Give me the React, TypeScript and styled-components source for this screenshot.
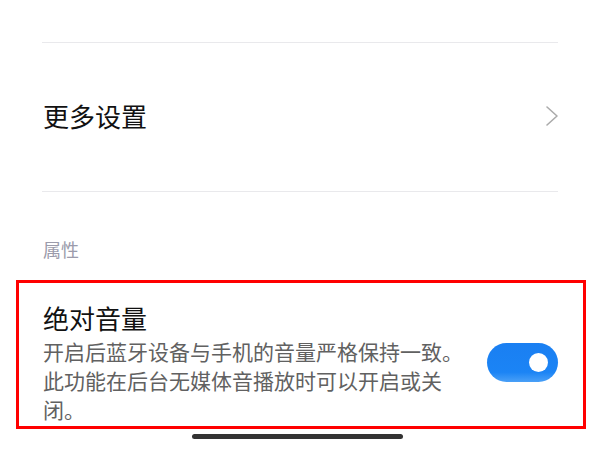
import React from "react";
import styled, { createGlobalStyle } from "styled-components";

const GlobalStyle = createGlobalStyle`
  html, body {
    margin: 0;
    padding: 0;
    background: #ffffff;
  }
  body {
    font-family: "Noto Sans CJK SC", "Noto Sans", sans-serif;
    -webkit-font-smoothing: antialiased;
  }
`;

const Page = styled.div`
  width: 600px;
  height: 450px;
  overflow: hidden;
  background: #ffffff;
  display: flex;
  flex-direction: column;
  padding-top: 42px;
  box-sizing: border-box;
`;

const List = styled.div`
  display: flex;
  flex-direction: column;
  padding: 0 42px;
`;

const Divider = styled.div`
  height: 1px;
  background: #e9e9ec;
`;

const NavRow = styled.div`
  height: 148px;
  display: flex;
  align-items: center;
  justify-content: space-between;
  padding-left: 1px;
`;

const RowTitle = styled.span`
  font-size: 26px;
  line-height: 36px;
  color: #111111;
  margin-top: -3px;
`;

const Chevron = styled.svg`
  width: 14px;
  height: 22px;
  margin-right: -1px;
  margin-top: -2px;
`;

const SectionHeader = styled.div`
  font-size: 18px;
  line-height: 24px;
  color: #9b9bab;
  padding-left: 1px;
  margin-top: 45px;
  height: 43px;
`;

const Highlight = styled.div`
  margin: 0 14px 0 16px;
  border: 3px solid #ff0000;
  display: flex;
  align-items: center;
  padding: 17px 25px 1px 24px;
  height: 149px;
  box-sizing: border-box;
`;

const TextColumn = styled.div`
  flex: 1;
  display: flex;
  flex-direction: column;
  min-width: 0;
`;

const ItemTitle = styled.div`
  font-size: 26px;
  line-height: 34px;
  color: #111111;
`;

const Description = styled.div`
  font-size: 21px;
  line-height: 29px;
  color: #616161;
  margin-top: 2px;
`;

const Switch = styled.div<{ $on: boolean }>`
  flex: none;
  width: 71px;
  height: 39px;
  border-radius: 20px;
  margin-left: 19px;
  background: ${(p) =>
    p.$on ? "linear-gradient(180deg, #1a7ff2 0%, #1b84f5 75%, #4aa0f7 100%)" : "#cccccc"};
  display: flex;
  align-items: center;
  justify-content: ${(p) => (p.$on ? "flex-end" : "flex-start")};
  padding: 0 10px;
  box-sizing: border-box;
`;

const Knob = styled.div`
  width: 19px;
  height: 19px;
  border-radius: 50%;
  background: #ffffff;
`;

const HomeBarWrap = styled.div`
  display: flex;
  justify-content: center;
  padding-top: 5px;
  padding-right: 5px;
`;

const HomeBar = styled.div`
  width: 211px;
  height: 5px;
  border-radius: 3px;
  background: #333333;
`;

export default function App() {
  return (
    <>
      <GlobalStyle />
      <Page>
        <List>
          <Divider />
          <NavRow>
            <RowTitle>更多设置</RowTitle>
            <Chevron viewBox="0 0 14 22">
              <path
                d="M2 2 L12 11 L2 20"
                fill="none"
                stroke="#ababab"
                strokeWidth="1.6"
                strokeLinecap="round"
                strokeLinejoin="round"
              />
            </Chevron>
          </NavRow>
          <Divider />
          <SectionHeader>属性</SectionHeader>
        </List>
        <Highlight>
          <TextColumn>
            <ItemTitle>绝对音量</ItemTitle>
            <Description>
              开启后蓝牙设备与手机的音量严格保持一致。此功能在后台无媒体音播放时可以开启或关闭。
            </Description>
          </TextColumn>
          <Switch $on>
            <Knob />
          </Switch>
        </Highlight>
        <HomeBarWrap>
          <HomeBar />
        </HomeBarWrap>
      </Page>
    </>
  );
}
